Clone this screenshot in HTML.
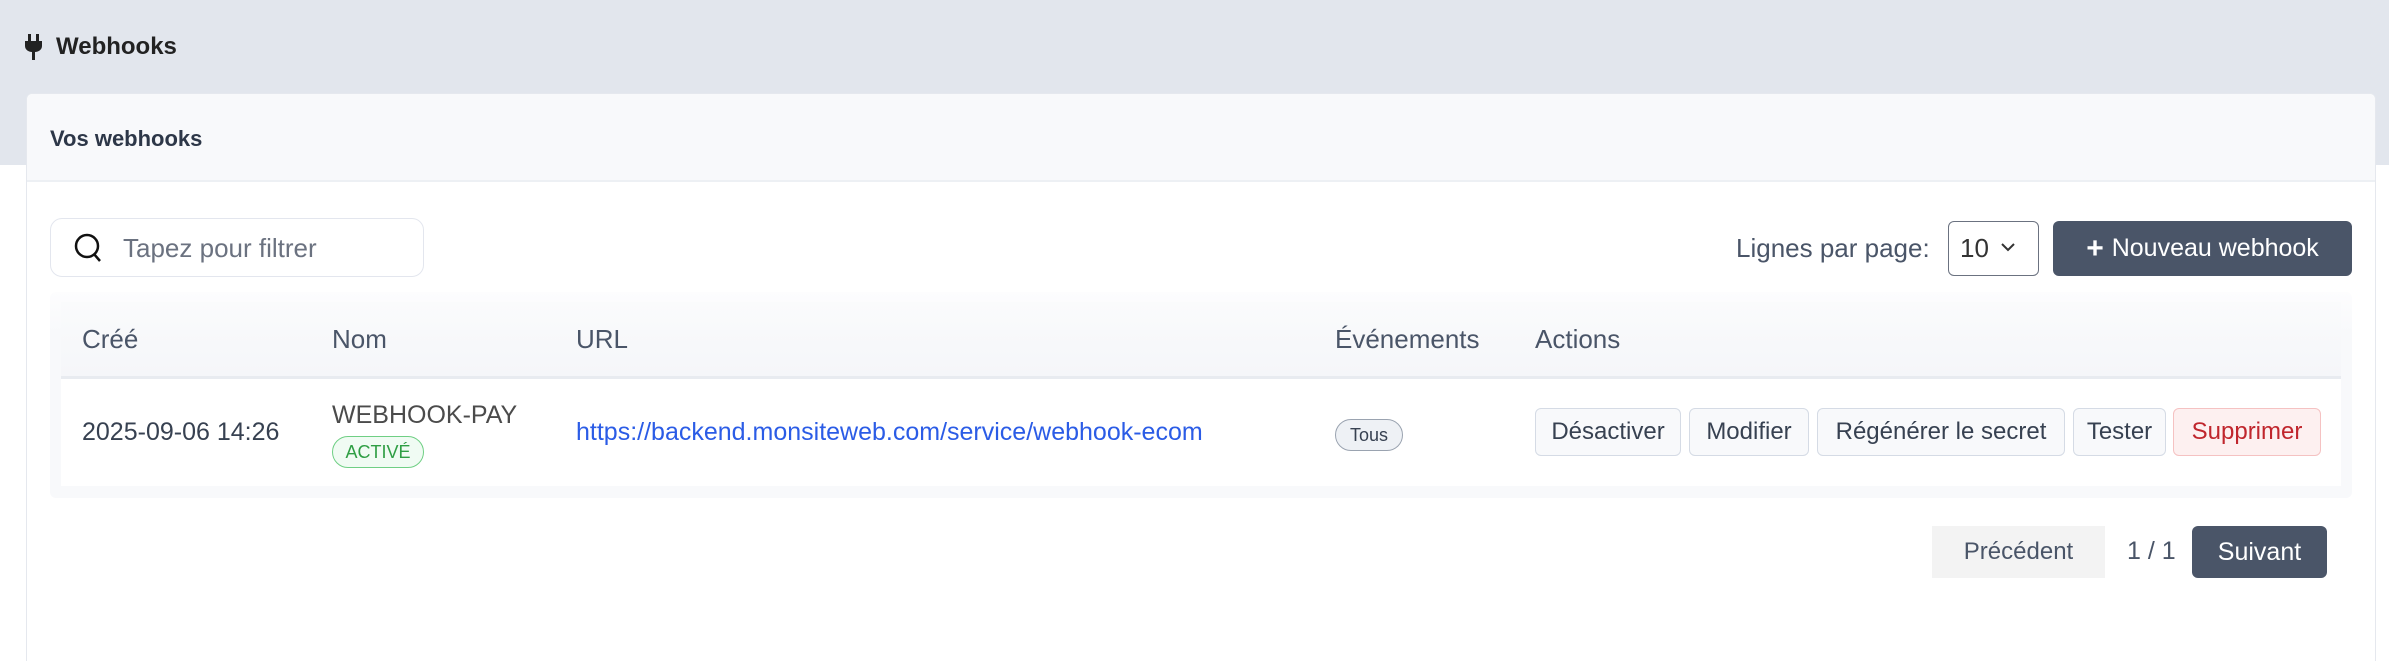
<!DOCTYPE html>
<html><head><meta charset="utf-8"><style>
*{box-sizing:border-box;margin:0;padding:0}
html,body{width:2389px;height:661px;overflow:hidden}
body{background:#fff;font-family:"Liberation Sans",sans-serif;position:relative;color:#4a5568}
.a{position:absolute}
.band{left:0;top:0;width:2389px;height:165px;background:#e2e6ed}
.card{left:26px;top:93px;width:2350px;height:568px;background:#fff;border:1px solid #e5e8ee;border-bottom:none;border-radius:6px 6px 0 0}
.ch{left:27px;top:94px;width:2348px;height:88px;background:#f8f9fb;border-bottom:2px solid #edf0f4;border-radius:6px 6px 0 0}
.btn{display:flex;align-items:center;justify-content:center;border-radius:6px;font-size:23px}
.ab{top:408px;height:48px;background:#f8f9fb;border:1.5px solid #d5dbe5;color:#374151;border-radius:6px;font-size:24px;display:flex;align-items:center;justify-content:center}
.th{top:324px;font-size:26px;color:#4a5568;font-weight:500}
</style></head><body>
<div class="a band"></div>
<svg class="a" style="left:25px;top:34px" width="17" height="26" viewBox="0 0 17 26"><rect x="3" y="0" width="3" height="7" fill="#222"/><rect x="11" y="0" width="3" height="7" fill="#222"/><path d="M0 7H17V12C17 16 13 18 10 18V26H7V18C4 18 0 16 0 12Z" fill="#222"/></svg>
<div class="a" style="left:56px;top:33px;font-size:24px;font-weight:bold;color:#222">Webhooks</div>
<div class="a card"></div>
<div class="a ch"></div>
<div class="a" style="left:50px;top:126px;font-size:22px;font-weight:bold;color:#2d3748">Vos webhooks</div>
<div class="a" style="left:50px;top:218px;width:374px;height:59px;border:1.5px solid #e3e6ee;border-radius:12px;background:#fff"></div>
<svg class="a" style="left:73px;top:232px" width="32" height="32" viewBox="0 0 32 32"><circle cx="14" cy="14" r="11" fill="none" stroke="#111" stroke-width="2.5"/><path d="M21 22L27 29" stroke="#111" stroke-width="2.5"/></svg>
<div class="a" style="left:123px;top:233px;font-size:26px;color:#6b7280">Tapez pour filtrer</div>
<div class="a" style="left:1736px;top:233px;font-size:26px;color:#4a5568">Lignes par page:</div>
<div class="a" style="left:1948px;top:221px;width:91px;height:55px;border:1.5px solid #6b7280;border-radius:6px;background:#fff"></div>
<div class="a" style="left:1960px;top:233px;font-size:26px;color:#333">10</div>
<svg class="a" style="left:2000px;top:241px" width="16" height="12" viewBox="0 0 16 12"><path d="M2 3L8 9L14 3" fill="none" stroke="#333" stroke-width="2"/></svg>
<div class="a btn" style="left:2053px;top:221px;width:299px;height:55px;background:#4a5568;color:#fff;font-size:25px">
<span style="font-size:30px;font-weight:bold;margin-right:8px">+</span>Nouveau webhook</div>
<div class="a" style="left:50px;top:292px;width:2302px;height:206px;background:linear-gradient(#fdfdfe,#f8f9fb 20%);border-radius:6px"></div>
<div class="a" style="left:61px;top:302px;width:2280px;height:74px;background:linear-gradient(#fafbfc,#f5f6f9)"></div>
<div class="a" style="left:61px;top:376px;width:2280px;height:3px;background:#e8ebf0"></div>
<div class="a" style="left:61px;top:379px;width:2280px;height:107px;background:#fff"></div>
<div class="a th" style="left:82px">Créé</div>
<div class="a th" style="left:332px">Nom</div>
<div class="a th" style="left:576px">URL</div>
<div class="a th" style="left:1335px">Événements</div>
<div class="a th" style="left:1535px">Actions</div>
<div class="a" style="left:82px;top:418px;font-size:25px;color:#374151">2025-09-06 14:26</div>
<div class="a" style="left:332px;top:401px;font-size:25px;color:#4b4b4b">WEBHOOK-PAY</div>
<div class="a" style="left:332px;top:436px;width:92px;height:32px;border:1.5px solid #6fcf84;border-radius:16px;background:#f0fbf3;color:#2f9e44;font-size:18px;display:flex;align-items:center;justify-content:center">ACTIVÉ</div>
<div class="a" style="left:576px;top:418px;font-size:25px;color:#2b5ce6">https://backend.monsiteweb.com/service/webhook-ecom</div>
<div class="a" style="left:1335px;top:419px;width:68px;height:32px;border:1.5px solid #9aa3b0;border-radius:16px;background:#eef1f5;color:#374151;font-size:18px;display:flex;align-items:center;justify-content:center">Tous</div>
<div class="a ab" style="left:1535px;width:146px">Désactiver</div>
<div class="a ab" style="left:1689px;width:120px">Modifier</div>
<div class="a ab" style="left:1817px;width:248px">Régénérer le secret</div>
<div class="a ab" style="left:2073px;width:93px">Tester</div>
<div class="a ab" style="left:2173px;width:148px;background:#fdf0f0;border-color:#f5c2c2;color:#c0262d">Supprimer</div>
<div class="a btn" style="left:1932px;top:526px;width:173px;height:52px;background:#f3f3f3;border-radius:0;color:#4a5568;font-size:24px">Précédent</div>
<div class="a" style="left:2127px;top:537px;font-size:25px;color:#4a5568">1 / 1</div>
<div class="a btn" style="left:2192px;top:526px;width:135px;height:52px;background:#4a5568;color:#fff;font-size:25px">Suivant</div>
</body></html>
